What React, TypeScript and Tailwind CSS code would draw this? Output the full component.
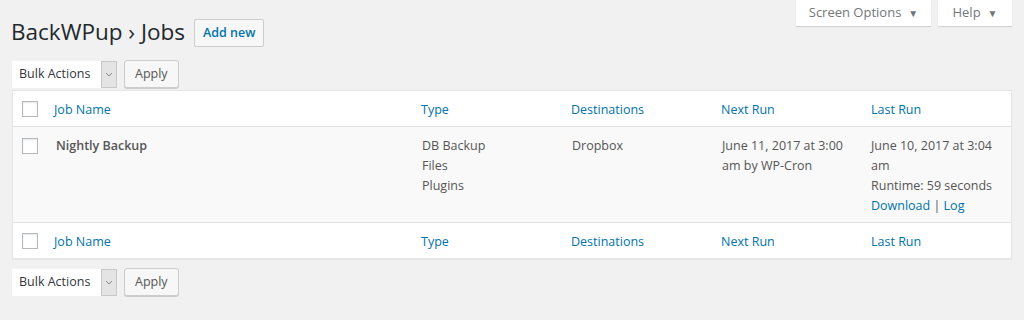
import React from "react";

const font = { fontFamily: '"Open Sans", "Noto Sans", sans-serif' };

function Checkbox() {
  return (
    <span className="block w-4 h-4 bg-white border border-[#b4b9be] shadow-[inset_0_1px_2px_rgba(0,0,0,0.1)]" />
  );
}

function BulkBar() {
  return (
    <div className="flex items-center gap-[7px]">
      <div className="flex h-[27px] w-[105px] bg-white">
        <span className="flex-1 pl-[7px] flex items-center text-[12.5px] text-[#32373c]">Bulk Actions</span>
        <span className="w-[16px] bg-[#e4e4e4] border border-[#c8c8c8] flex items-center justify-center">
          <svg width="8" height="5" viewBox="0 0 8 5"><path d="M1 1l3 3 3-3" fill="none" stroke="#888" strokeWidth="1" /></svg>
        </span>
      </div>
      <button className="h-[28px] px-[10px] border border-[#cccccc] rounded-[3px] bg-[#f7f7f7] shadow-[0_1px_0_#cccccc] text-[12.5px] text-[#555]">
        Apply
      </button>
    </div>
  );
}

const cols = "grid grid-cols-[31px_367px_150px_150px_150px_1fr]";

function HeadRow({ top }: { top?: boolean }) {
  return (
    <div className={`${cols} h-[36px] items-center bg-white ${top ? "border-b border-[#e1e1e1]" : "border-t border-[#e1e1e1]"}`}>
      <div className="pl-[9px]"><Checkbox /></div>
      <div className="pl-[10px] pt-[3px] text-[12.5px] text-[#0073aa]">Job Name</div>
      <div className="pl-[10px] pt-[3px] text-[12.5px] text-[#0073aa]">Type</div>
      <div className="pl-[10px] pt-[3px] text-[12.5px] text-[#0073aa]">Destinations</div>
      <div className="pl-[10px] pt-[3px] text-[12.5px] text-[#0073aa]">Next Run</div>
      <div className="pl-[10px] pt-[3px] text-[12.5px] text-[#0073aa]">Last Run</div>
    </div>
  );
}

export default function App() {
  return (
    <div className="w-[1024px] h-[320px] bg-[#f1f1f1] relative overflow-hidden" style={font}>
      <div className="flex justify-end gap-[7px] pr-[12px]">
        <div className="h-[26px] w-[135px] bg-white shadow-[0_1px_1px_rgba(0,0,0,0.12)] flex items-center justify-center gap-[7px] text-[13px] text-[#72777c]">
          Screen Options <span className="text-[10px] text-[#72777c]">▼</span>
        </div>
        <div className="h-[26px] w-[74px] bg-white shadow-[0_1px_1px_rgba(0,0,0,0.12)] flex items-center justify-center gap-[7px] text-[13px] text-[#72777c]">
          Help <span className="text-[10px] text-[#72777c]">▼</span>
        </div>
      </div>
      <div className="pl-[11px] pr-[12px]">
        <div className="flex items-center h-[28px] mt-[-7px]">
          <h1 className="text-[22.5px] text-[#23282d] leading-[28px] mt-[-2px]">BackWPup › Jobs</h1>
          <button className="ml-[9px] h-[28px] px-[8px] border border-[#cccccc] rounded-[2px] bg-[#f7f7f7] text-[12.5px] font-semibold text-[#0073aa]">
            Add new
          </button>
        </div>
        <div className="pl-[1px] mt-[13px]">
          <BulkBar />
        </div>
        <div className="ml-[1px] mt-[2px] border border-[#e5e5e5] shadow-[0_1px_1px_rgba(0,0,0,0.04)]">
          <HeadRow top />
          <div className={`${cols} bg-[#f9f9f9] h-[95px] text-[12.5px] text-[#555] leading-[20px]`}>
            <div className="pl-[9px] pt-[11px]"><Checkbox /></div>
            <div className="pl-[12px] pt-[9px] font-semibold">Nightly Backup</div>
            <div className="pl-[11px] pt-[9px]">
              <div>DB Backup</div>
              <div>Files</div>
              <div>Plugins</div>
            </div>
            <div className="pl-[11px] pt-[9px]">Dropbox</div>
            <div className="pl-[11px] pt-[9px] pr-[8px]">June 11, 2017 at 3:00 am by WP-Cron</div>
            <div className="pl-[10px] pt-[9px] pr-[8px]">
              <div>June 10, 2017 at 3:04 am</div>
              <div>Runtime: 59 seconds</div>
              <div><span className="text-[#0073aa]">Download</span> | <span className="text-[#0073aa]">Log</span></div>
            </div>
          </div>
          <HeadRow />
        </div>
        <div className="pl-[1px] mt-[9px]">
          <BulkBar />
        </div>
      </div>
    </div>
  );
}
